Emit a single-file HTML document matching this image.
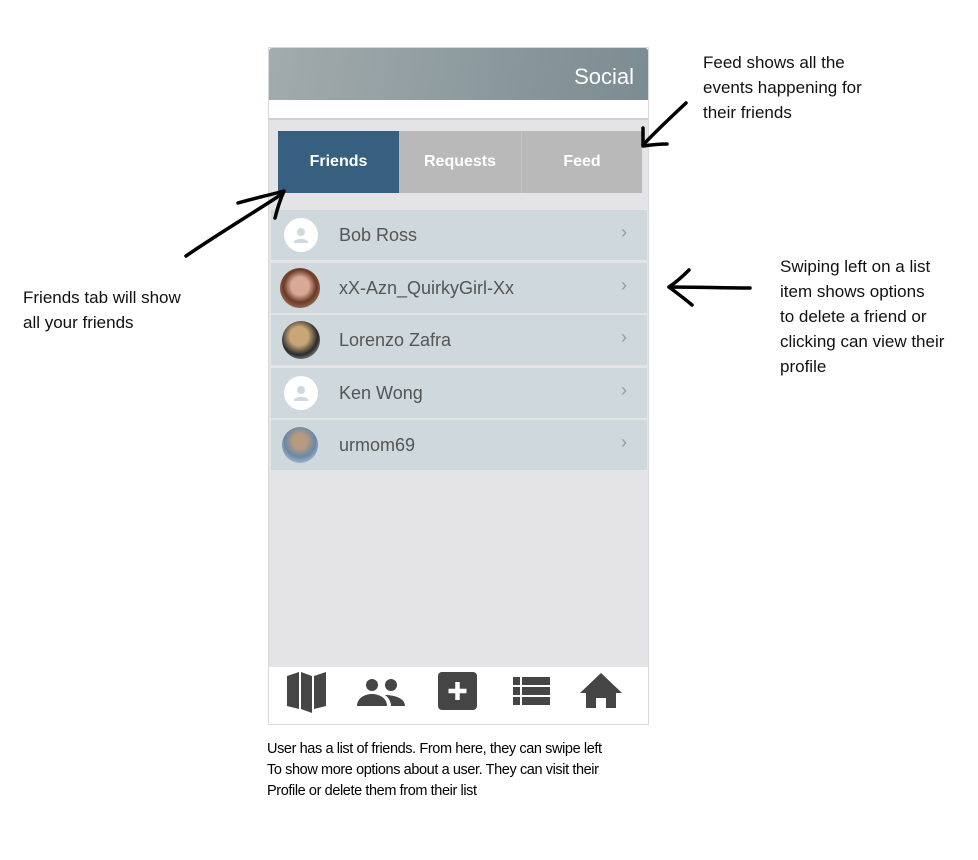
<!DOCTYPE html>
<html><head><meta charset="utf-8"><style>
body{margin:0;width:978px;height:860px;background:#fff;position:relative;font-family:"Liberation Sans",sans-serif;overflow:hidden}
.abs{position:absolute}
.phone{left:268px;top:47px;width:381px;height:678px;border:1px solid #d8d8d8;box-sizing:border-box;background:#fff}
.hdr{left:269px;top:48px;width:379px;height:52px;background:linear-gradient(100deg,#a2abad,#7b8c92);border-radius:3px 3px 0 0}
.hdr span{position:absolute;right:14px;top:16px;color:#fff;font-size:22px}
.gray{left:269px;top:118px;width:379px;height:547px;background:#e4e4e6;border-top:2px solid #d0d0d4}
.tab{top:131px;height:62px;color:#fff;font-weight:bold;font-size:16px;display:flex;align-items:center;justify-content:center}
.row{left:271px;width:376px;height:50px;background:#cfd8dc}
.row .av{position:absolute;left:13px;top:8px;width:34px;height:34px;border-radius:50%;background:#fff}
.row .nm{position:absolute;left:68px;top:15px;font-size:18px;color:#555}
.row .ch{position:absolute;right:20px;top:12px;font-size:18px;color:#999}
.note{font-family:"Liberation Sans",sans-serif;font-size:17px;color:#111;line-height:25px}
</style></head><body>
<div class="abs phone"></div>
<div class="abs hdr"><span>Social</span></div>
<div class="abs gray"></div>
<div class="abs tab" style="left:278px;width:121px;background:#365f80">Friends</div>
<div class="abs tab" style="left:399px;width:122px;background:#b9b9b9">Requests</div>
<div class="abs tab" style="left:521px;width:120px;background:#b9b9b9;border-left:1px solid #c4c4c4">Feed</div>

<div class="abs row" style="top:210px"><div class="av"><svg width="34" height="34"><circle cx="17" cy="14" r="4" fill="#cfd8dc"/><path d="M10 24c0-4 14-4 14 0v1H10z" fill="#cfd8dc"/></svg></div><div class="nm">Bob Ross</div><div class="ch">›</div></div>
<div class="abs row" style="top:263px"><div class="av" style="top:5px;left:9px;width:40px;height:40px;background:radial-gradient(circle at 50% 45%,#d9a995 0 30%,#6b3a26 55%,#c9a080)"></div><div class="nm">xX-Azn_QuirkyGirl-Xx</div><div class="ch">›</div></div>
<div class="abs row" style="top:315px"><div class="av" style="left:11px;width:38px;height:38px;top:6px;background:radial-gradient(circle at 45% 40%,#c9a677 0 30%,#2b2b2b 60%,#e0e0e0)"></div><div class="nm">Lorenzo Zafra</div><div class="ch">›</div></div>
<div class="abs row" style="top:368px"><div class="av"><svg width="34" height="34"><circle cx="17" cy="14" r="4" fill="#cfd8dc"/><path d="M10 24c0-4 14-4 14 0v1H10z" fill="#cfd8dc"/></svg></div><div class="nm">Ken Wong</div><div class="ch">›</div></div>
<div class="abs row" style="top:420px"><div class="av" style="left:11px;width:36px;height:36px;top:7px;background:radial-gradient(circle at 50% 40%,#b89a80 0 25%,#6a88a8 55%,#d8dde0)"></div><div class="nm">urmom69</div><div class="ch">›</div></div>

<svg class="abs" style="left:269px;top:665px" width="379" height="58">
<g fill="#454545">
<path d="M18 11l12-4v37l-12-3zM32 7l11 4v37l-11-4zM45 11l12-4v34l-12 3z"/>
<circle cx="103" cy="20" r="6"/><circle cx="122" cy="20" r="6"/>
<path d="M88 41c0-8 8-12 15-12s15 4 15 12z"/><path d="M116 30c9 0 20 3 20 11h-14c0-4-2-8-6-11z"/>
<rect x="169" y="7" width="39" height="38" rx="4"/>
<rect x="244" y="12" width="7" height="8"/><rect x="253" y="12" width="28" height="8"/>
<rect x="244" y="22" width="7" height="8"/><rect x="253" y="22" width="28" height="8"/>
<rect x="244" y="32" width="7" height="8"/><rect x="253" y="32" width="28" height="8"/>
<path d="M332 8l21 20h-6v15h-10V33h-10v10h-10V28h-6z"/>
</g>
<path d="M188.5 17v18M179.5 26h18" stroke="#fff" stroke-width="4.5"/>
</svg>

<div class="abs" style="left:267px;top:739px;font-family:'Liberation Sans',sans-serif;font-size:14.5px;line-height:21px;color:#000;letter-spacing:-0.4px">User has a list of friends. From here, they can swipe left<br>To show more options about a user. They can visit their<br>Profile or delete them from their list</div>

<div class="abs note" style="left:703px;top:50px">Feed shows all the<br>events happening for<br>their friends</div>
<div class="abs note" style="left:23px;top:285px">Friends tab will show<br>all your friends</div>
<div class="abs note" style="left:780px;top:254px">Swiping left on a list<br>item shows options<br>to delete a friend or<br>clicking can view their<br>profile</div>

<svg class="abs" style="left:0;top:0" width="978" height="860" fill="none" stroke="#000" stroke-width="3.5" stroke-linecap="round" stroke-linejoin="round">
<path d="M186 256C215 236 250 215 282 194"/><path d="M238 203C255 198 270 195 284 191C280 200 277 210 275 218"/>
<path d="M686 103C670 118 655 132 643 145"/><path d="M643 128C643 134 643 140 643 146C650 145 658 144 667 144"/>
<path d="M750 288C725 288 695 287 669 287"/><path d="M689 270C682 277 675 283 669 287C677 293 685 299 692 305"/>
</svg>
</body></html>
